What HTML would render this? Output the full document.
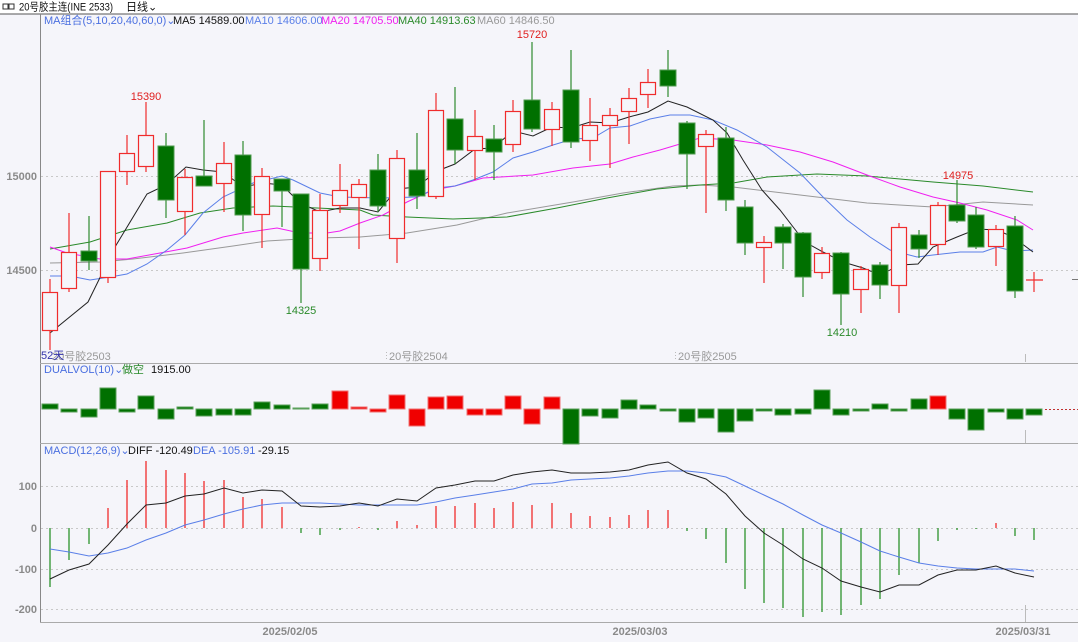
<!DOCTYPE html>
<html><head><meta charset="utf-8"><style>
html,body{margin:0;padding:0;width:1078px;height:642px;overflow:hidden;background:#f5f5fa;font-family:"Liberation Sans","Noto Sans CJK SC",sans-serif}
svg{position:absolute;left:0;top:0}
text{font-family:"Liberation Sans","Noto Sans CJK SC",sans-serif;font-size:11px}
.r{stroke:#f02c2c;stroke-width:1.2;fill:#f5f5fa}
.g{stroke:#4f9a4f;stroke-width:1;fill:#007000}
.wr{stroke:#f02c2c;stroke-width:1.2}
.wg{stroke:#2f8a2f;stroke-width:1.2}
.ax{fill:#8a8a8a;font-size:11px;font-weight:bold}
</style></head><body>
<svg width="1078" height="642" viewBox="0 0 1078 642">
<rect x="0" y="0" width="1078" height="14" fill="#ffffff"/>
<line x1="0" y1="14" x2="1078" y2="14" stroke="#555" stroke-width="1"/>
<rect x="3" y="4" width="5" height="5" fill="none" stroke="#333" stroke-width="1"/><rect x="9" y="4" width="5" height="5" fill="none" stroke="#333" stroke-width="1"/>
<text x="19" y="10.5" font-size="10.5" fill="#111" textLength="94" lengthAdjust="spacingAndGlyphs">20号胶主连(INE 2533)</text>
<text x="126" y="10.5" font-size="10.5" fill="#111">日线⌄</text>
<line x1="40.5" y1="14" x2="40.5" y2="622" stroke="#888"/>
<line x1="40" y1="363.5" x2="1078" y2="363.5" stroke="#aaa"/>
<line x1="40" y1="443.5" x2="1078" y2="443.5" stroke="#aaa"/>
<line x1="40" y1="622.5" x2="1078" y2="622.5" stroke="#aaa"/>
<g stroke="#c8c8c8" stroke-dasharray="2,3">
<line x1="41" y1="176.5" x2="1078" y2="176.5"/><line x1="41" y1="270.5" x2="1078" y2="270.5"/>
<line x1="41" y1="486.5" x2="1078" y2="486.5"/><line x1="41" y1="528.5" x2="1078" y2="528.5"/>
<line x1="41" y1="569.5" x2="1078" y2="569.5"/><line x1="41" y1="609.5" x2="1078" y2="609.5"/>
</g>
<line x1="1045" y1="409.5" x2="1078" y2="409.5" stroke="#c03030" stroke-dasharray="2,2"/>
<line x1="1072" y1="279.5" x2="1078" y2="279.5" stroke="#777"/>
<g stroke="#bbb"><line x1="1025.5" y1="354" x2="1025.5" y2="362"/><line x1="1025.5" y1="430" x2="1025.5" y2="443"/><line x1="1025.5" y1="605" x2="1025.5" y2="622"/><line x1="386.5" y1="352" x2="386.5" y2="360" stroke-dasharray="1,2"/><line x1="675.5" y1="352" x2="675.5" y2="360" stroke-dasharray="1,2"/></g>
<text class="ax" x="37" y="180" text-anchor="end">15000</text>
<text class="ax" x="37" y="274" text-anchor="end">14500</text>
<text class="ax" x="37" y="490" text-anchor="end">100</text>
<text class="ax" x="37" y="532" text-anchor="end">0</text>
<text class="ax" x="37" y="573" text-anchor="end">-100</text>
<text class="ax" x="37" y="613" text-anchor="end">-200</text>
<text x="290" y="635" fill="#8a8a8a" font-size="11" font-weight="bold" text-anchor="middle">2025/02/05</text>
<text x="640" y="635" fill="#8a8a8a" font-size="11" font-weight="bold" text-anchor="middle">2025/03/03</text>
<text x="1023" y="635" fill="#8a8a8a" font-size="11" font-weight="bold" text-anchor="middle">2025/03/31</text>
<text x="52" y="360" fill="#999" font-size="10">20号胶2503</text>
<text x="389" y="360" fill="#999" font-size="10">20号胶2504</text>
<text x="678" y="360" fill="#999" font-size="10">20号胶2505</text>
<text x="41" y="359" fill="#3333aa" font-size="10.5">52天</text>
<text y="24" font-size="10.5"><tspan x="44" fill="#4a6fe0">MA组合(5,10,20,40,60,0)⌄</tspan><tspan x="173" fill="#111">MA5 14589.00</tspan><tspan x="245" fill="#5a7fe8">MA10 14606.00</tspan><tspan x="321" fill="#f020f0">MA20 14705.50</tspan><tspan x="398" fill="#2a8a2a">MA40 14913.63</tspan><tspan x="477" fill="#999">MA60 14846.50</tspan></text>
<text y="373" font-size="10.5"><tspan x="44" fill="#4a6fe0">DUALVOL(10)⌄</tspan><tspan x="122" fill="#2a8a2a">做空</tspan><tspan x="151" fill="#111">1915.00</tspan></text>
<text y="454" font-size="10.5"><tspan x="44" fill="#4a6fe0">MACD(12,26,9)⌄</tspan><tspan x="128" fill="#111">DIFF -120.49</tspan><tspan x="193" fill="#4a6fe0">DEA -105.91</tspan><tspan x="258" fill="#111">-29.15</tspan></text>
<text x="146" y="100" fill="#e02020" text-anchor="middle">15390</text>
<text x="532" y="38" fill="#e02020" text-anchor="middle">15720</text>
<text x="958" y="179" fill="#e02020" text-anchor="middle">14975</text>
<text x="301" y="314" fill="#2a8a2a" text-anchor="middle">14325</text>
<text x="842" y="336" fill="#2a8a2a" text-anchor="middle">14210</text>
<g fill="none" stroke-width="1">
<polyline stroke="#999" points="50,263 100,262 133,259 183,253 233,246 267,241 317,238 360,237 407,233 457,225 507,213 573,202 623,193 673,186 700,185 733,187 800,195 867,203 933,207 983,202 1033,205"/>
<polyline stroke="#2a8a2a" points="50,249 90,242 127,230 167,223 200,213 233,208 273,206 317,208 360,210 373,215 407,217 453,219 507,217 557,208 607,198 657,189 700,185 733,183 767,177 817,174 867,176 900,179 933,182 983,186 1033,192"/>
<polyline stroke="#f020f0" points="50,247 67,253 100,259 127,259 160,253 187,248 223,237 243,233 277,228 300,233 327,233 340,231 360,223 383,215 407,202 433,190 455,186 483,178 533,175 573,168 610,164 633,157 660,150 700,138 733,140 767,145 800,152 833,162 867,175 900,187 933,197 960,203 987,210 1017,220 1033,230"/>
<polyline stroke="#5a7fe8" points="50,276 70,276 90,280 110,277 127,274 147,264 167,250 185,235 203,213 223,197 253,183 282,176 293,180 320,193 340,197 380,198 417,197 437,188 455,186 473,180 493,172 513,158 533,152 553,145 573,139 593,138 610,128 630,126 650,119 670,115 690,115 713,120 737,130 767,147 800,173 823,197 847,220 870,237 890,250 917,257 933,255 960,252 983,252 997,247 1013,251 1033,250"/>
<polyline stroke="#222" points="50,333 88,302 115,247 147,194 166,185 186,167 203,170 223,172 243,187 263,183 282,185 300,203 320,212 340,208 360,208 378,212 397,189 417,187 437,171 455,164 475,149 493,148 513,131 533,136 552,127 571,128 590,122 610,123 629,117 648,112 668,101 687,107 713,120 727,133 743,160 762,190 780,210 797,232 805,242 823,252 843,262 863,268 880,275 900,265 918,264 933,247 957,237 977,229 997,230 1013,237 1033,252"/>
</g>
<g>
<line class="wr" x1="50" y1="279" x2="50" y2="350"/><rect class="r" x="42.5" y="292.5" width="15" height="38"/>
<line class="wr" x1="69" y1="213" x2="69" y2="292"/><rect class="r" x="61.5" y="252.5" width="15" height="36"/>
<line class="wg" x1="89" y1="216" x2="89" y2="270"/><rect class="g" x="81" y="251" width="16" height="10"/>
<line class="wr" x1="108" y1="171" x2="108" y2="283"/><rect class="r" x="100.5" y="171.5" width="15" height="106"/>
<line class="wr" x1="127" y1="135" x2="127" y2="185"/><rect class="r" x="119.5" y="153.5" width="15" height="18"/>
<line class="wr" x1="146" y1="102" x2="146" y2="172"/><rect class="r" x="138.5" y="135.5" width="15" height="31"/>
<line class="wg" x1="166" y1="133" x2="166" y2="218"/><rect class="g" x="158" y="146" width="16" height="54"/>
<line class="wr" x1="185" y1="169" x2="185" y2="235"/><rect class="r" x="177.5" y="177.5" width="15" height="34"/>
<line class="wg" x1="204" y1="120" x2="204" y2="186"/><rect class="g" x="196" y="176" width="16" height="10"/>
<line class="wr" x1="224" y1="142" x2="224" y2="212"/><rect class="r" x="216.5" y="163.5" width="15" height="20"/>
<line class="wg" x1="243" y1="141" x2="243" y2="231"/><rect class="g" x="235" y="155" width="16" height="60"/>
<line class="wr" x1="262" y1="168" x2="262" y2="248"/><rect class="r" x="254.5" y="176.5" width="15" height="38"/>
<line class="wg" x1="282" y1="179" x2="282" y2="227"/><rect class="g" x="274" y="179" width="16" height="12"/>
<line class="wg" x1="301" y1="194" x2="301" y2="303"/><rect class="g" x="293" y="194" width="16" height="75"/>
<line class="wr" x1="320" y1="194" x2="320" y2="271"/><rect class="r" x="312.5" y="210.5" width="15" height="48"/>
<line class="wr" x1="340" y1="164" x2="340" y2="213"/><rect class="r" x="332.5" y="190.5" width="15" height="15"/>
<line class="wr" x1="359" y1="179" x2="359" y2="249"/><rect class="r" x="351.5" y="184.5" width="15" height="13"/>
<line class="wg" x1="378" y1="154" x2="378" y2="212"/><rect class="g" x="370" y="170" width="16" height="36"/>
<line class="wr" x1="397" y1="150" x2="397" y2="263"/><rect class="r" x="389.5" y="158.5" width="15" height="80"/>
<line class="wg" x1="417" y1="133" x2="417" y2="209"/><rect class="g" x="409" y="170" width="16" height="26"/>
<line class="wr" x1="436" y1="93" x2="436" y2="199"/><rect class="r" x="428.5" y="110.5" width="15" height="86"/>
<line class="wg" x1="455" y1="87" x2="455" y2="164"/><rect class="g" x="447" y="119" width="16" height="31"/>
<line class="wr" x1="475" y1="110" x2="475" y2="180"/><rect class="r" x="467.5" y="136.5" width="15" height="14"/>
<line class="wg" x1="494" y1="125" x2="494" y2="180"/><rect class="g" x="486" y="139" width="16" height="13"/>
<line class="wr" x1="513" y1="100" x2="513" y2="152"/><rect class="r" x="505.5" y="111.5" width="15" height="33"/>
<line class="wg" x1="532" y1="42" x2="532" y2="132"/><rect class="g" x="524" y="100" width="16" height="29"/>
<line class="wr" x1="552" y1="102" x2="552" y2="146"/><rect class="r" x="544.5" y="109.5" width="15" height="20"/>
<line class="wg" x1="571" y1="50" x2="571" y2="148"/><rect class="g" x="563" y="90" width="16" height="52"/>
<line class="wr" x1="590" y1="98" x2="590" y2="161"/><rect class="r" x="582.5" y="125.5" width="15" height="15"/>
<line class="wr" x1="610" y1="108" x2="610" y2="168"/><rect class="r" x="602.5" y="115.5" width="15" height="10"/>
<line class="wr" x1="629" y1="88" x2="629" y2="144"/><rect class="r" x="621.5" y="98.5" width="15" height="13"/>
<line class="wr" x1="648" y1="69" x2="648" y2="108"/><rect class="r" x="640.5" y="82.5" width="15" height="12"/>
<line class="wg" x1="668" y1="50" x2="668" y2="97"/><rect class="g" x="660" y="70" width="16" height="16"/>
<line class="wg" x1="687" y1="121" x2="687" y2="189"/><rect class="g" x="679" y="123" width="16" height="31"/>
<line class="wr" x1="706" y1="130" x2="706" y2="213"/><rect class="r" x="698.5" y="134.5" width="15" height="12"/>
<line class="wg" x1="726" y1="127" x2="726" y2="211"/><rect class="g" x="718" y="138" width="16" height="62"/>
<line class="wg" x1="745" y1="200" x2="745" y2="255"/><rect class="g" x="737" y="207" width="16" height="36"/>
<line class="wr" x1="764" y1="236" x2="764" y2="283"/><rect class="r" x="756.5" y="242.5" width="15" height="5"/>
<line class="wg" x1="783" y1="224" x2="783" y2="269"/><rect class="g" x="775" y="227" width="16" height="16"/>
<line class="wg" x1="803" y1="232" x2="803" y2="297"/><rect class="g" x="795" y="233" width="16" height="44"/>
<line class="wr" x1="822" y1="247" x2="822" y2="279"/><rect class="r" x="814.5" y="253.5" width="15" height="19"/>
<line class="wg" x1="841" y1="252" x2="841" y2="325"/><rect class="g" x="833" y="253" width="16" height="41"/>
<line class="wr" x1="861" y1="266" x2="861" y2="313"/><rect class="r" x="853.5" y="269.5" width="15" height="20"/>
<line class="wg" x1="880" y1="262" x2="880" y2="299"/><rect class="g" x="872" y="265" width="16" height="20"/>
<line class="wr" x1="899" y1="223" x2="899" y2="313"/><rect class="r" x="891.5" y="227.5" width="15" height="58"/>
<line class="wg" x1="919" y1="230" x2="919" y2="258"/><rect class="g" x="911" y="235" width="16" height="14"/>
<line class="wr" x1="938" y1="202" x2="938" y2="255"/><rect class="r" x="930.5" y="205.5" width="15" height="39"/>
<line class="wg" x1="957" y1="180" x2="957" y2="223"/><rect class="g" x="949" y="205" width="16" height="16"/>
<line class="wg" x1="976" y1="207" x2="976" y2="249"/><rect class="g" x="968" y="215" width="16" height="32"/>
<line class="wr" x1="996" y1="225" x2="996" y2="266"/><rect class="r" x="988.5" y="229.5" width="15" height="17"/>
<line class="wg" x1="1015" y1="216" x2="1015" y2="298"/><rect class="g" x="1007" y="226" width="16" height="65"/>
<line class="wr" x1="1034" y1="272" x2="1034" y2="292"/><line class="wr" x1="1026" y1="280" x2="1043" y2="280" stroke-width="2"/>
</g>
<g stroke-width="1">
<g fill="#007000" stroke="#5aa05a">
<rect x="42" y="404" width="16" height="5"/><rect x="61" y="409" width="16" height="3"/><rect x="81" y="409" width="16" height="8"/><rect x="100" y="388" width="16" height="21"/><rect x="119" y="409" width="16" height="3"/><rect x="138" y="396" width="16" height="13"/><rect x="158" y="409" width="16" height="10"/><rect x="177" y="407" width="16" height="2"/><rect x="196" y="409" width="16" height="7"/><rect x="216" y="409" width="16" height="6"/><rect x="235" y="409" width="16" height="6"/><rect x="254" y="402" width="16" height="7"/><rect x="274" y="405" width="16" height="4"/><rect x="293" y="408" width="16" height="1"/><rect x="312" y="404" width="16" height="5"/>
<rect x="563" y="409" width="16" height="35"/><rect x="582" y="409" width="16" height="7"/><rect x="602" y="409" width="16" height="9"/><rect x="621" y="400" width="16" height="9"/><rect x="640" y="405" width="16" height="4"/><rect x="660" y="409" width="16" height="2"/><rect x="679" y="409" width="16" height="13"/><rect x="698" y="409" width="16" height="9"/><rect x="718" y="409" width="16" height="23"/><rect x="737" y="409" width="16" height="12"/><rect x="756" y="409" width="16" height="2"/><rect x="775" y="409" width="16" height="6"/><rect x="795" y="409" width="16" height="5"/><rect x="814" y="390" width="16" height="19"/><rect x="833" y="409" width="16" height="6"/><rect x="853" y="409" width="16" height="2"/><rect x="872" y="404" width="16" height="5"/><rect x="891" y="409" width="16" height="2"/><rect x="911" y="399" width="16" height="10"/>
<rect x="949" y="409" width="16" height="10"/><rect x="968" y="409" width="16" height="21"/><rect x="988" y="409" width="16" height="3"/><rect x="1007" y="409" width="16" height="10"/><rect x="1026" y="409" width="16" height="6"/>
</g>
<g fill="#f00000" stroke="#f07070">
<rect x="332" y="391" width="16" height="18"/><rect x="351" y="407" width="16" height="2"/><rect x="370" y="409" width="16" height="3"/><rect x="389" y="395" width="16" height="14"/><rect x="409" y="409" width="16" height="17"/><rect x="428" y="397" width="16" height="12"/><rect x="447" y="396" width="16" height="13"/><rect x="467" y="409" width="16" height="6"/><rect x="486" y="409" width="16" height="6"/><rect x="505" y="396" width="16" height="13"/><rect x="524" y="409" width="16" height="15"/><rect x="544" y="397" width="16" height="12"/><rect x="930" y="396" width="16" height="13"/>
</g>
</g>
<g stroke-width="1.4">
<g stroke="#3a9a3a">
<line x1="50" y1="528" x2="50" y2="587"/><line x1="69" y1="528" x2="69" y2="560"/><line x1="89" y1="528" x2="89" y2="544"/><line x1="301" y1="528" x2="301" y2="533"/><line x1="320" y1="528" x2="320" y2="535"/><line x1="340" y1="528" x2="340" y2="530"/><line x1="378" y1="528" x2="378" y2="530"/><line x1="687" y1="528" x2="687" y2="531"/><line x1="706" y1="528" x2="706" y2="539"/><line x1="726" y1="528" x2="726" y2="563"/><line x1="745" y1="528" x2="745" y2="589"/><line x1="764" y1="528" x2="764" y2="603"/><line x1="783" y1="528" x2="783" y2="608"/><line x1="803" y1="528" x2="803" y2="617"/><line x1="822" y1="528" x2="822" y2="612"/><line x1="841" y1="528" x2="841" y2="615"/><line x1="861" y1="528" x2="861" y2="605"/><line x1="880" y1="528" x2="880" y2="599"/><line x1="899" y1="528" x2="899" y2="575"/><line x1="919" y1="528" x2="919" y2="563"/><line x1="938" y1="528" x2="938" y2="541"/><line x1="957" y1="528" x2="957" y2="530"/><line x1="976" y1="528" x2="976" y2="529"/><line x1="1015" y1="528" x2="1015" y2="536"/><line x1="1034" y1="528" x2="1034" y2="540"/>
</g>
<g stroke="#f03a3a">
<line x1="108" y1="528" x2="108" y2="508"/><line x1="127" y1="528" x2="127" y2="480"/><line x1="146" y1="528" x2="146" y2="461"/><line x1="166" y1="528" x2="166" y2="470"/><line x1="185" y1="528" x2="185" y2="473"/><line x1="204" y1="528" x2="204" y2="481"/><line x1="224" y1="528" x2="224" y2="480"/><line x1="243" y1="528" x2="243" y2="497"/><line x1="262" y1="528" x2="262" y2="499"/><line x1="282" y1="528" x2="282" y2="507"/><line x1="359" y1="528" x2="359" y2="527"/><line x1="397" y1="528" x2="397" y2="521"/><line x1="417" y1="528" x2="417" y2="525"/><line x1="436" y1="528" x2="436" y2="506"/><line x1="455" y1="528" x2="455" y2="506"/><line x1="475" y1="528" x2="475" y2="503"/><line x1="494" y1="528" x2="494" y2="508"/><line x1="513" y1="528" x2="513" y2="502"/><line x1="532" y1="528" x2="532" y2="505"/><line x1="552" y1="528" x2="552" y2="503"/><line x1="571" y1="528" x2="571" y2="513"/><line x1="590" y1="528" x2="590" y2="516"/><line x1="610" y1="528" x2="610" y2="517"/><line x1="629" y1="528" x2="629" y2="515"/><line x1="648" y1="528" x2="648" y2="510"/><line x1="668" y1="528" x2="668" y2="510"/><line x1="996" y1="528" x2="996" y2="523"/>
</g>
</g>
<g fill="none" stroke-width="1">
<polyline stroke="#5a7fe8" points="50,549 69,552 89,556 108,553 127,548 146,540 166,533 185,525 204,520 224,514 243,509 262,505 282,503 301,503 320,503 340,504 359,505 378,505 397,505 417,505 436,502 455,498 475,495 494,492 513,489 532,484 552,483 571,480 590,479 610,478 629,476 648,473 668,471 687,471 706,473 726,477 745,486 764,495 783,504 803,515 822,525 841,533 861,542 880,551 899,557 919,563 938,566 957,568 976,569 996,569 1015,569 1034,571"/>
<polyline stroke="#222" points="50,579 69,570 89,564 108,545 127,524 146,505 166,503 185,496 204,494 224,488 243,493 262,490 282,491 301,506 320,507 340,506 359,503 378,506 397,499 417,501 436,488 455,485 475,481 494,481 513,475 532,472 552,470 571,473 590,473 610,472 629,470 648,465 668,462 687,473 706,479 726,494 745,516 764,533 783,545 803,559 822,568 841,581 861,587 880,592 899,585 919,585 938,575 957,570 976,570 996,566 1015,573 1034,577"/>
</g>
</svg>
</body></html>
